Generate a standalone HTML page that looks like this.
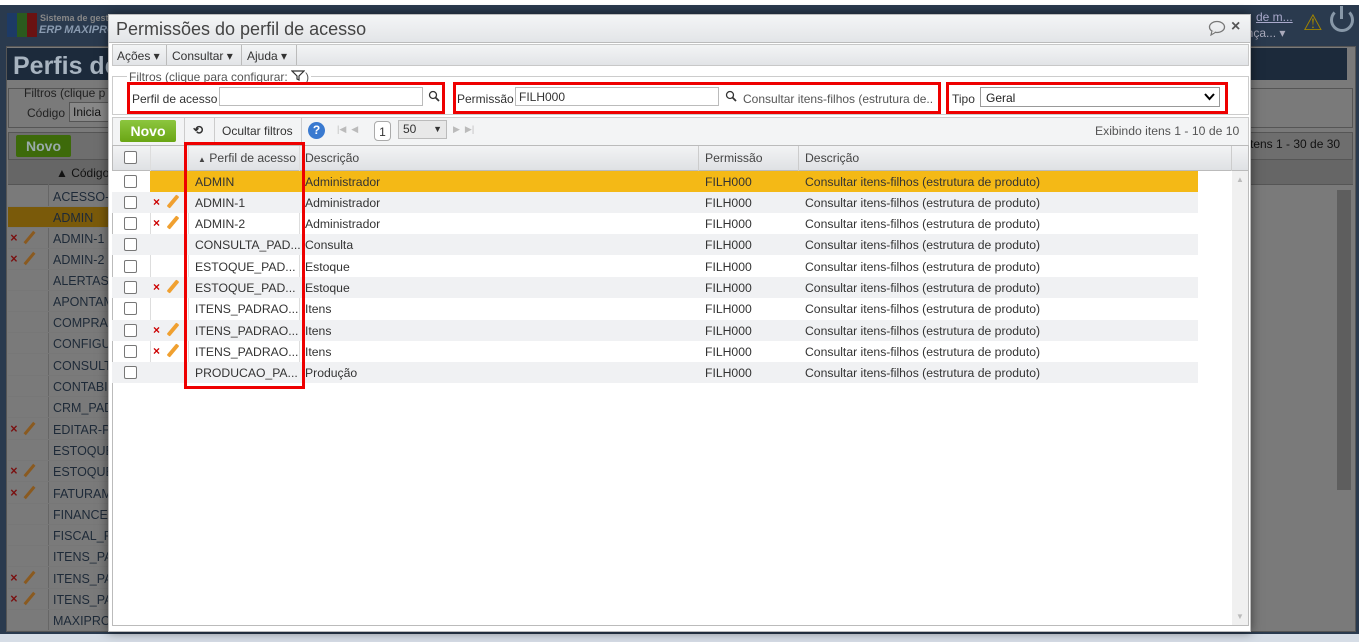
<!DOCTYPE html>
<html><head><meta charset="utf-8"><style>
*{box-sizing:border-box;margin:0;padding:0}
body{width:1359px;height:642px;overflow:hidden;position:relative;background:#fff;font-family:"Liberation Sans",sans-serif;font-size:12px;color:#333}
.abs{position:absolute}
.bg{left:0;top:5px;width:1359px;height:631px;background:#2a3a4e}
.bot{left:0;top:634px;width:1359px;height:8px;background:#d6dde6}
.panel{left:6px;top:46px;width:1350px;height:586px;background:#7a7a7a;border:1px solid #555}
.ttl{left:7px;top:48px;width:1340px;height:32px;background:#1c2a3b;color:#a8b4c0;font-size:25px;font-weight:bold;padding:4px 6px}
.brow{left:8px;width:320px;height:21px;font-size:12.5px;color:#1e2a38;padding:4px 0 0 45px;border-bottom:1px solid #777}
.bx{position:absolute;left:2px;top:3px;color:#7a1010;font-weight:bold}
.bp{position:absolute;left:20px;top:2px;width:3px;height:15px;background:#8a5a20;transform:rotate(40deg)}
.dlg{left:108px;top:14px;width:1143px;height:618px;background:#fff;border:1px solid #bbb;box-shadow:0 0 10px rgba(0,0,0,.5)}
.red{border:3px solid #e00;position:absolute}
.row{position:absolute;left:112px;width:1086px;height:21px;font-size:12.2px;color:#333}
.row span{position:absolute;top:4px;white-space:nowrap}
.cb{position:absolute;left:12px;top:4px;width:13px;height:13px;border:1px solid #777;background:#fff;border-radius:2px}
.x{position:absolute;left:41px;top:3px;color:#c00;font-weight:bold;font-size:12px}
.pen{position:absolute;left:59px;top:2px;width:4px;height:15px;background:#f0a030;transform:rotate(40deg);border-radius:1px}
</style></head><body>
<div class="abs bg"></div>
<div class="abs bot"></div>
<div class="abs" style="left:7px;top:13px;width:30px;height:24px;background:linear-gradient(90deg,#1d3a66 33%,#2b5a1e 33% 66%,#6a1212 66%)"></div>
<div class="abs" style="left:40px;top:13px;color:#888;font-size:9px;font-weight:bold">Sistema de gestã</div>
<div class="abs" style="left:39px;top:24px;color:#8a9bb0;font-size:11px;font-weight:bold;font-style:italic">ERP MAXIPRO</div>
<div class="abs panel"></div>
<div class="abs ttl">Perfis de</div>
<div class="abs" style="left:8px;top:88px;width:1345px;height:40px;border:1px solid #555"></div>
<div class="abs" style="left:24px;top:86px;color:#222;font-size:12px">Filtros (clique p</div>
<div class="abs" style="left:27px;top:106px;color:#222">Código</div>
<div class="abs" style="left:69px;top:102px;width:50px;height:20px;background:#888;border:1px solid #555;padding:2px 3px;color:#111">Inicia</div>
<div class="abs" style="left:8px;top:132px;width:1345px;height:28px;background:#6e6e6e;border:1px solid #555"></div>
<div class="abs" style="left:16px;top:135px;width:55px;height:22px;background:#3d6a0a;color:#9aa;font-weight:bold;font-size:14px;text-align:center;padding-top:3px;border-radius:2px">Novo</div>
<div class="abs" style="left:1250px;top:137px;color:#111;font-size:12px">tens 1 - 30 de 30</div>
<div class="abs" style="left:8px;top:160px;width:1345px;height:25px;background:#666;border-bottom:1px solid #555"></div>
<div class="abs" style="left:56px;top:166px;color:#111">▲ Código</div>
<div class="abs" style="left:48px;top:160px;width:1px;height:470px;background:#666"></div>
<div class="abs" style="left:8px;top:207px;width:320px;height:21px;background:#7a5a0a"></div>
<div class="abs" style="left:1337px;top:190px;width:14px;height:300px;background:#5e5e5e"></div>
<div class="abs brow" style="top:186px">ACESSO-V</div>
<div class="abs brow" style="top:207px">ADMIN</div>
<div class="abs brow" style="top:228px"><i class="bx">×</i><i class="bp"></i>ADMIN-1</div>
<div class="abs brow" style="top:249px"><i class="bx">×</i><i class="bp"></i>ADMIN-2</div>
<div class="abs brow" style="top:270px">ALERTAS</div>
<div class="abs brow" style="top:291px">APONTAM.</div>
<div class="abs brow" style="top:312px">COMPRAS</div>
<div class="abs brow" style="top:333px">CONFIGU.</div>
<div class="abs brow" style="top:355px">CONSULTA</div>
<div class="abs brow" style="top:376px">CONTABIL</div>
<div class="abs brow" style="top:397px">CRM_PAD</div>
<div class="abs brow" style="top:419px"><i class="bx">×</i><i class="bp"></i>EDITAR-P</div>
<div class="abs brow" style="top:440px">ESTOQUE</div>
<div class="abs brow" style="top:461px"><i class="bx">×</i><i class="bp"></i>ESTOQUE</div>
<div class="abs brow" style="top:483px"><i class="bx">×</i><i class="bp"></i>FATURAME</div>
<div class="abs brow" style="top:504px">FINANCEI</div>
<div class="abs brow" style="top:525px">FISCAL_P</div>
<div class="abs brow" style="top:546px">ITENS_PA</div>
<div class="abs brow" style="top:568px"><i class="bx">×</i><i class="bp"></i>ITENS_PA</div>
<div class="abs brow" style="top:589px"><i class="bx">×</i><i class="bp"></i>ITENS_PA</div>
<div class="abs brow" style="top:610px">MAXIPRO</div>
<div class="abs" style="left:1256px;top:10px;color:#aac;font-size:12px;text-decoration:underline">de m...</div>
<div class="abs" style="left:1240px;top:26px;color:#aab;font-size:12px">ança... ▾</div>
<div class="abs" style="left:1303px;top:10px;color:#a08400;font-size:22px">⚠</div>
<div class="abs" style="left:1330px;top:8px;width:24px;height:24px;border:3px solid #8898a8;border-radius:50%;border-top-color:transparent"></div>
<div class="abs" style="left:1340px;top:6px;width:3px;height:13px;background:#8898a8"></div>

<div class="abs dlg"></div>
<div class="abs" style="left:109px;top:15px;width:1141px;height:28px;background:linear-gradient(#f4f5f6,#e3e5e8);border-bottom:1px solid #bbb"></div>
<div class="abs" style="left:116px;top:19px;font-size:18px;color:#444">Permissões do perfil de acesso</div>
<svg class="abs" style="left:1208px;top:20px" width="18" height="16"><ellipse cx="9" cy="7" rx="7.5" ry="5.5" fill="none" stroke="#777" stroke-width="1.3"/><path d="M4 11 L3 15 L8 12" fill="#fff" stroke="#777" stroke-width="1.2"/></svg>
<div class="abs" style="left:1231px;top:18px;font-size:16px;color:#555;font-weight:bold">×</div>
<div class="abs" style="left:112px;top:44px;width:1137px;height:22px;background:linear-gradient(#f3f4f5,#e2e4e7);border:1px solid #c8c8c8"></div>
<div class="abs" style="left:117px;top:49px;color:#333">Ações ▾</div>
<div class="abs" style="left:166px;top:45px;width:1px;height:20px;background:#bbb"></div>
<div class="abs" style="left:172px;top:49px;color:#333">Consultar ▾</div>
<div class="abs" style="left:241px;top:45px;width:1px;height:20px;background:#bbb"></div>
<div class="abs" style="left:247px;top:49px;color:#333">Ajuda ▾</div>
<div class="abs" style="left:296px;top:45px;width:1px;height:20px;background:#bbb"></div>
<div class="abs" style="left:112px;top:76px;width:1137px;height:39px;border:1px solid #ccc"></div>
<div class="abs" style="left:127px;top:70px;background:#fff;padding:0 2px;color:#555;font-size:12px">Filtros (clique para configurar: <svg width="14" height="11"><path d="M1 1 H13 L8 6 V10 L6 9 V6 Z" fill="none" stroke="#333" stroke-width="1.2"/></svg>)</div>
<div class="abs" style="left:132px;top:92px;color:#333">Perfil de acesso</div>
<div class="abs" style="left:219px;top:87px;width:204px;height:19px;border:1px solid #bbb;background:#fff"></div>
<svg class="abs" style="left:428px;top:90px" width="12" height="12"><circle cx="5" cy="5" r="3.5" fill="none" stroke="#333" stroke-width="1.3"/><path d="M7.5 7.5 L11 11" stroke="#333" stroke-width="1.8"/></svg>
<div class="abs" style="left:457px;top:92px;color:#333">Permissão</div>
<div class="abs" style="left:515px;top:87px;width:204px;height:19px;border:1px solid #bbb;background:#fff;padding:2px 3px;color:#333">FILH000</div>
<svg class="abs" style="left:725px;top:90px" width="12" height="12"><circle cx="5" cy="5" r="3.5" fill="none" stroke="#333" stroke-width="1.3"/><path d="M7.5 7.5 L11 11" stroke="#333" stroke-width="1.8"/></svg>
<div class="abs" style="left:743px;top:92px;color:#555">Consultar itens-filhos (estrutura de..</div>
<div class="abs" style="left:952px;top:92px;color:#333">Tipo</div>
<div class="abs" style="left:980px;top:87px;width:240px;height:20px;border:1px solid #999;background:#fff;padding:3px 5px;color:#222">Geral</div>
<svg class="abs" style="left:1204px;top:93px" width="11" height="8"><path d="M1 1 L5.5 6 L10 1" fill="none" stroke="#000" stroke-width="2"/></svg>
<div class="red" style="left:127px;top:82px;width:318px;height:32px"></div>
<div class="red" style="left:453px;top:82px;width:488px;height:32px"></div>
<div class="red" style="left:946px;top:82px;width:282px;height:32px"></div>
<div class="abs" style="left:112px;top:117px;width:1137px;height:29px;background:#f3f4f5;border:1px solid #ccc"></div>
<div class="abs" style="left:120px;top:120px;width:56px;height:22px;background:linear-gradient(#8cc63f,#6aa514);color:#fff;font-weight:bold;font-size:14px;text-align:center;padding-top:3px;border-radius:2px">Novo</div>
<div class="abs" style="left:184px;top:118px;width:1px;height:27px;background:#ccc"></div>
<div class="abs" style="left:193px;top:123px;color:#333;font-weight:bold">⟲</div>
<div class="abs" style="left:214px;top:118px;width:1px;height:27px;background:#ccc"></div>
<div class="abs" style="left:222px;top:124px;color:#333">Ocultar filtros</div>
<div class="abs" style="left:301px;top:118px;width:1px;height:27px;background:#ccc"></div>
<div class="abs" style="left:308px;top:122px;width:17px;height:17px;border-radius:50%;background:#3a7ad0;color:#fff;font-weight:bold;text-align:center;font-size:12px;line-height:17px">?</div>
<div class="abs" style="left:337px;top:124px;color:#bbb;font-size:9px">|◀ &nbsp;◀</div>
<div class="abs" style="left:374px;top:121px;width:17px;height:20px;border:1px solid #aaa;border-radius:4px;background:#fff;text-align:center;padding-top:3px">1</div>
<div class="abs" style="left:398px;top:120px;width:49px;height:19px;border:1px solid #bbb;background:#e8e8e8;padding:1px 4px">50<span style="position:absolute;right:4px;top:3px;font-size:9px">▼</span></div>
<div class="abs" style="left:453px;top:124px;color:#bbb;font-size:9px">▶ &nbsp;▶|</div>
<div class="abs" style="left:1095px;top:124px;color:#555;font-size:12.2px">Exibindo itens 1 - 10 de 10</div>
<div class="abs" style="left:112px;top:145px;width:1137px;height:481px;border:1px solid #bbb"></div>
<div class="abs" style="left:113px;top:146px;width:1135px;height:25px;background:linear-gradient(#f2f3f4,#dfe1e4);border-bottom:1px solid #bbb"></div>
<div class="abs" style="left:150px;top:146px;width:1px;height:237px;background:#ddd"></div>
<div class="abs" style="left:188px;top:146px;width:1px;height:237px;background:#ddd"></div>
<div class="abs" style="left:299px;top:146px;width:1px;height:237px;background:#ddd"></div>
<div class="abs" style="left:698px;top:146px;width:1px;height:25px;background:#ccc"></div>
<div class="abs" style="left:798px;top:146px;width:1px;height:25px;background:#ccc"></div>
<div class="abs" style="left:1231px;top:146px;width:1px;height:25px;background:#ccc"></div>
<div class="abs" style="left:124px;top:151px;width:13px;height:13px;border:1px solid #777;background:#fff;border-radius:2px"></div>
<div class="abs" style="left:198px;top:151px;color:#444;font-size:12.2px"><span style="font-size:8px">▲</span> Perfil de acesso</div>
<div class="abs" style="left:305px;top:151px;color:#444;font-size:12.2px">Descrição</div>
<div class="abs" style="left:705px;top:151px;color:#444;font-size:12.2px">Permissão</div>
<div class="abs" style="left:805px;top:151px;color:#444;font-size:12.2px">Descrição</div>
<div class="abs" style="left:1232px;top:171px;width:16px;height:454px;background:#f0f0f0"></div>
<div class="abs" style="left:1236px;top:175px;color:#bbb;font-size:8px">▲</div>
<div class="abs" style="left:1236px;top:612px;color:#bbb;font-size:8px">▼</div>

<div class="row" style="top:171px;background:linear-gradient(90deg,#fff 38px,#f4b916 38px)"><div class="cb"></div><span style="left:83px">ADMIN</span><span style="left:193px">Administrador</span><span style="left:593px">FILH000</span><span style="left:693px">Consultar itens-filhos (estrutura de produto)</span></div>
<div class="row" style="top:192px;background:#f0f1f3"><div class="cb"></div><div class="x">×</div><div class="pen"></div><span style="left:83px">ADMIN-1</span><span style="left:193px">Administrador</span><span style="left:593px">FILH000</span><span style="left:693px">Consultar itens-filhos (estrutura de produto)</span></div>
<div class="row" style="top:213px"><div class="cb"></div><div class="x">×</div><div class="pen"></div><span style="left:83px">ADMIN-2</span><span style="left:193px">Administrador</span><span style="left:593px">FILH000</span><span style="left:693px">Consultar itens-filhos (estrutura de produto)</span></div>
<div class="row" style="top:234px;background:#f0f1f3"><div class="cb"></div><span style="left:83px">CONSULTA_PAD...</span><span style="left:193px">Consulta</span><span style="left:593px">FILH000</span><span style="left:693px">Consultar itens-filhos (estrutura de produto)</span></div>
<div class="row" style="top:256px"><div class="cb"></div><span style="left:83px">ESTOQUE_PAD...</span><span style="left:193px">Estoque</span><span style="left:593px">FILH000</span><span style="left:693px">Consultar itens-filhos (estrutura de produto)</span></div>
<div class="row" style="top:277px;background:#f0f1f3"><div class="cb"></div><div class="x">×</div><div class="pen"></div><span style="left:83px">ESTOQUE_PAD...</span><span style="left:193px">Estoque</span><span style="left:593px">FILH000</span><span style="left:693px">Consultar itens-filhos (estrutura de produto)</span></div>
<div class="row" style="top:298px"><div class="cb"></div><span style="left:83px">ITENS_PADRAO...</span><span style="left:193px">Itens</span><span style="left:593px">FILH000</span><span style="left:693px">Consultar itens-filhos (estrutura de produto)</span></div>
<div class="row" style="top:320px;background:#f0f1f3"><div class="cb"></div><div class="x">×</div><div class="pen"></div><span style="left:83px">ITENS_PADRAO...</span><span style="left:193px">Itens</span><span style="left:593px">FILH000</span><span style="left:693px">Consultar itens-filhos (estrutura de produto)</span></div>
<div class="row" style="top:341px"><div class="cb"></div><div class="x">×</div><div class="pen"></div><span style="left:83px">ITENS_PADRAO...</span><span style="left:193px">Itens</span><span style="left:593px">FILH000</span><span style="left:693px">Consultar itens-filhos (estrutura de produto)</span></div>
<div class="row" style="top:362px;background:#f0f1f3"><div class="cb"></div><span style="left:83px">PRODUCAO_PA...</span><span style="left:193px">Produção</span><span style="left:593px">FILH000</span><span style="left:693px">Consultar itens-filhos (estrutura de produto)</span></div>
<div class="red" style="left:184px;top:142px;width:121px;height:247px"></div>
</body></html>
